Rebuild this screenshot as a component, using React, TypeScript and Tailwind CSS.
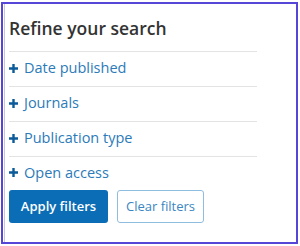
import { FC } from 'react'

const filters = ['Date published', 'Journals', 'Publication type', 'Open access']

const Plus: FC = () => (
  <svg width="9" height="9" viewBox="0 0 9 9" className="mr-[6px] shrink-0">
    <path d="M4.5 0v9M0 4.5h9" stroke="#0b5a9a" strokeWidth="2.4" />
  </svg>
)

const FilterRow: FC<{ label: string; last?: boolean }> = ({ label, last }) => (
  <div
    className={
      'flex items-center pb-[2px] ' +
      (last ? 'h-[33px]' : 'h-[35px] border-b border-[#e3e3e3]')
    }
  >
    <Plus />
    <span className="text-[#2c7bb8] text-[14.5px]">{label}</span>
  </div>
)

export default function App() {
  return (
    <div className="w-[300px] h-[246px] bg-white pl-[1px] pt-[2px] font-['Open_Sans',sans-serif]">
      <div className="w-[297px] h-[242px] border-2 border-[#5546d8] bg-white">
        <div className="h-full border-l border-[#c8c8c8] ml-[1px] pl-[4px] pr-[39px]">
          <div className="h-[48px] flex items-center border-b border-[#e3e3e3] pt-[1px]">
            <h2 className="text-[17.5px] font-semibold text-[#333]">Refine your search</h2>
          </div>
          {filters.map((f, i) => (
            <FilterRow key={f} label={f} last={i === filters.length - 1} />
          ))}
          <div className="flex gap-[9px]">
            <button className="h-[33px] w-[99px] rounded-[3px] bg-[#0a6db5] text-white text-[13px] font-semibold">
              Apply filters
            </button>
            <button className="h-[33px] w-[87px] rounded-[3px] border border-[#8fbde0] text-[#3a86c2] text-[13px] bg-white">
              Clear filters
            </button>
          </div>
        </div>
      </div>
    </div>
  )
}
